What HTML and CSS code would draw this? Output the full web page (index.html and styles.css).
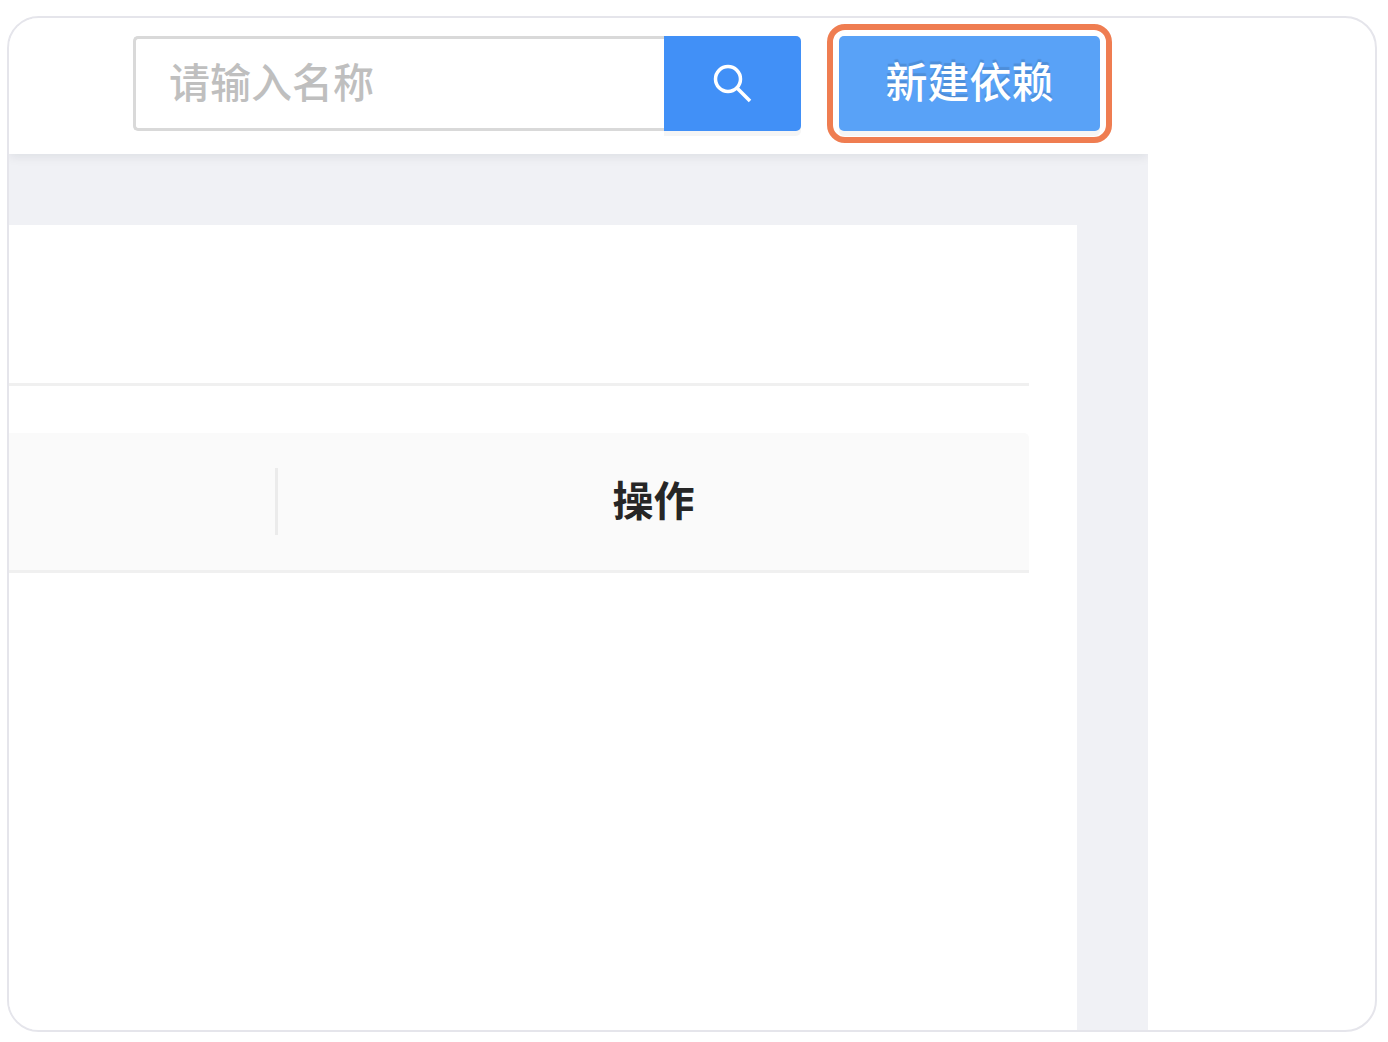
FILE: index.html
```
<!DOCTYPE html>
<html lang="zh-CN">
<head>
    <meta charset="UTF-8">
    <title>依赖管理</title>
    <link rel="stylesheet" href="styles.css">
</head>
<body>
    <div class="frame">
        <div class="app">
            <header>
                <form class="search">
                    <input type="text" placeholder="请输入名称" aria-label="名称">
                    <button type="button" aria-label="搜索">
                        <svg viewBox="0 0 40 40" width="40" height="40">
                            <circle cx="15" cy="15" r="12.5"></circle>
                            <path d="M23.5 23.5L37 37"></path>
                        </svg>
                    </button>
                </form>
                <div class="highlight">
                    <button type="button" class="create">新建依赖</button>
                </div>
            </header>
            <main>
                <section class="card">
                    <div class="card-head"></div>
                    <table>
                        <thead>
                            <tr>
                                <td class="col-info"></td>
                                <th scope="col">操作</th>
                            </tr>
                        </thead>
                    </table>
                </section>
            </main>
        </div>
    </div>
</body>
</html>
```
FILE: styles.css
```
* {
    padding: 0;
    margin: 0;
    box-sizing: border-box;
}

body {
    display: flex;
    min-height: 100vh;
    padding: 16px 11px 10px 7px;
    background: #fff;
    font-family: "Noto Sans CJK SC", sans-serif;
    font-size: 41px;
}

.frame {
    flex: 1;
    display: flex;
    border: solid 2px #e5e5eb;
    border-radius: 32px;
    overflow: hidden;
}

.app {
    flex: 1;
    display: flex;
    flex-direction: column;
    margin-right: 227px;
    background: #f0f1f5;
}

header {
    display: flex;
    justify-content: flex-end;
    align-items: center;
    gap: 26px;
    padding: 6px 36px 11px;
    background: #fff;
    box-shadow: 0 3px 10px rgba(0, 21, 41, .08);
    clip-path: inset(0 0 -16px 0);
}

/* 搜索框 */
.search {
    display: flex;
    width: 668px;
    height: 95px;
}

.search input {
    flex: 1;
    min-width: 0;
    padding: 0 33px 8px;
    border: solid 3px #d9d9d9;
    border-right: none;
    border-radius: 5px 0 0 5px;
    background: #fff;
    font: inherit;
    font-weight: 500;
    outline: none;
}

.search input::placeholder {
    color: #bfbfbf;
    opacity: 1;
}

.search button {
    display: flex;
    justify-content: center;
    align-items: center;
    width: 137px;
    border: none;
    border-radius: 0 5px 5px 0;
    background: #4190f7;
    box-shadow: 0 5px 0 rgba(0, 0, 0, .04);
}

.search svg {
    fill: none;
    stroke: #fff;
    stroke-width: 3.5;
}

/* 新建按钮 */
.highlight {
    padding: 6px;
    border: solid 6px #ef7d51;
    border-radius: 18px;
}

.create {
    display: block;
    width: 261px;
    height: 95px;
    padding-bottom: 8px;
    border: none;
    border-radius: 5px;
    background: #59a2f7;
    box-shadow: 0 5px 0 rgba(0, 0, 0, .04);
    color: #fff;
    font: inherit;
    font-size: 42px;
    font-weight: 500;
    text-shadow: 0 -3px 1px rgba(0, 0, 0, .12);
}

main {
    flex: 1;
    display: flex;
    padding: 71px 71px 0 0;
}

.card {
    flex: 1;
    padding-right: 48px;
    background: #fff;
}

.card-head {
    height: 161px;
    margin-bottom: 47px;
    border-bottom: solid 3px #f0f0f0;
}

table {
    width: 100%;
    table-layout: fixed;
    border-spacing: 0;
}

thead td,
thead th {
    height: 140px;
    padding-bottom: 8px;
    border-bottom: solid 3px #f0f0f0;
    background: #fafafa;
}

thead th {
    border-top-right-radius: 5px;
    color: #262626;
    font-weight: 700;
}

.col-info {
    position: relative;
    width: 269px;
}

/* 列分隔线 */
.col-info::after {
    content: "";
    position: absolute;
    top: 35px;
    right: 0;
    width: 3px;
    height: 67px;
    background: #ebebeb;
}
```
